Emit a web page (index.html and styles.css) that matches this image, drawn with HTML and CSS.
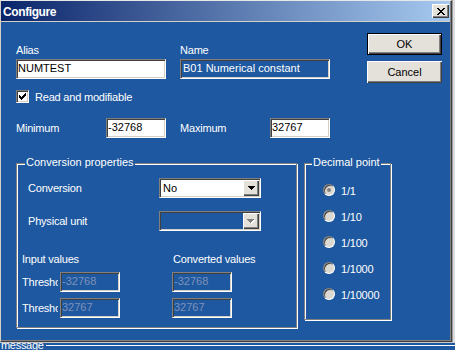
FILE: index.html
```html
<!DOCTYPE html>
<html>
<head>
<meta charset="utf-8">
<title>Configure</title>
<link rel="stylesheet" href="styles.css">
</head>
<body>
<div class="screen">
  <div class="dialog">
    <div class="titlebar">
      <span class="title">Configure</span>
      <span class="close">
        <svg width="8" height="7" viewBox="0 0 8 7" shape-rendering="crispEdges"><path d="M0 0h2v1h1v1h2v-1h1v-1h2v1h-1v1h-1v1h-1v1h1v1h1v1h1v1h-2v-1h-1v-1h-2v1h-1v1h-2v-1h1v-1h1v-1h1v-1h-1v-1h-1v-1h-1z" fill="#000"/></svg>
      </span>
    </div>
    <div class="body">
      <div class="top">
        <div class="fields">
          <div class="pair">
            <div class="field">
              <span class="lbl">Alias</span>
              <div class="edit">NUMTEST</div>
            </div>
            <div class="field">
              <span class="lbl">Name</span>
              <div class="edit ro">B01 Numerical constant</div>
            </div>
          </div>
          <div class="check-row">
            <span class="checkbox">
              <svg width="7" height="7" viewBox="0 0 7 7" shape-rendering="crispEdges"><path d="M6 0h1v3h-1v1h-1v1h-1v1h-1v1h-1v-1h-1v-1h-1v-3h1v1h1v1h1v-1h1v-1h1z" fill="#000"/></svg>
            </span>
            <span class="lbl">Read and modifiable</span>
          </div>
          <div class="minmax">
            <span class="lbl">Minimum</span>
            <div class="edit">-32768</div>
            <span></span>
            <span class="lbl">Maximum</span>
            <div class="edit">32767</div>
          </div>
        </div>
        <div class="buttons">
          <div class="btn default">OK</div>
          <div class="btn">Cancel</div>
        </div>
      </div>
      <div class="groups">
        <div class="group conv">
          <span class="gtitle">Conversion properties</span>
          <div class="combo-row">
            <span class="lbl dim">Conversion</span>
            <div class="combo">
              <span class="combo-text">No</span>
              <span class="drop"><svg width="7" height="4" viewBox="0 0 7 4" shape-rendering="crispEdges"><path d="M0 0h7v1h-1v1h-1v1h-1v1h-1v-1h-1v-1h-1v-1h-1z" fill="#000"/></svg></span>
            </div>
          </div>
          <div class="combo-row second">
            <span class="lbl dim">Physical unit</span>
            <div class="combo disabled">
              <span class="combo-text"></span>
              <span class="drop"><svg width="8" height="5" viewBox="0 0 8 5" shape-rendering="crispEdges"><path d="M1 1h7v1h-1v1h-1v1h-1v1h-1v-1h-1v-1h-1v-1h-1z" fill="#fff"/><path d="M0 0h7v1h-1v1h-1v1h-1v1h-1v-1h-1v-1h-1v-1h-1z" fill="#808080"/></svg></span>
            </div>
          </div>
          <div class="values">
            <span class="lbl dim head-in">Input values</span>
            <span class="lbl dim head-out">Converted values</span>
            <span class="lbl dim thresh">Threshold</span>
            <div class="edit off">-32768</div>
            <span></span>
            <div class="edit off">-32768</div>
            <span class="lbl dim thresh">Threshold</span>
            <div class="edit off">32767</div>
            <span></span>
            <div class="edit off">32767</div>
          </div>
        </div>
        <div class="group dec">
          <span class="gtitle">Decimal point</span>
          <div class="radios">
            <div class="radio-row"><span class="radio on"></span><span class="lbl dim">1/1</span></div>
            <div class="radio-row"><span class="radio"></span><span class="lbl dim">1/10</span></div>
            <div class="radio-row"><span class="radio"></span><span class="lbl dim">1/100</span></div>
            <div class="radio-row"><span class="radio"></span><span class="lbl dim">1/1000</span></div>
            <div class="radio-row"><span class="radio"></span><span class="lbl dim">1/10000</span></div>
          </div>
        </div>
      </div>
    </div>
  </div>
  <div class="strip"></div>
</div>
<div class="message-bar">
  <span class="msg">message</span>
  <span class="rule"></span>
</div>
</body>
</html>
```
FILE: styles.css
```css
* { box-sizing: border-box; }
html, body { margin: 0; padding: 0; }
body {
  width: 455px;
  height: 350px;
  overflow: hidden;
  background: #1e58a0;
  font-family: "Liberation Sans", Arial, sans-serif;
  font-size: 11px;
  color: #fff;
}
.screen { display: flex; height: 342px; }
.dialog {
  width: 452px;
  height: 342px;
  display: flex;
  flex-direction: column;
  background: #1e58a0;
  border-top: 1px solid #e8e8e8;
  border-left: 1px solid #d4d0c8;
  border-right: 1px solid #404040;
  border-bottom: 1px solid #404040;
  box-shadow: inset -1px -1px 0 #808080;
}
.strip {
  flex: 1;
  background: #dcdcdc;
  border-left: 1px solid #9a9a9a;
}
.titlebar {
  height: 21px;
  flex: none;
  display: flex;
  align-items: center;
  justify-content: space-between;
  padding: 1px 1px 0 2px;
  background: linear-gradient(to right, #0a246a, #a6caf0);
  border-bottom: 1px solid #d4d0c8;
  margin-right: 1px;
}
.title {
  font-weight: bold;
  font-size: 12px;
  letter-spacing: -0.4px;
  line-height: 14px;
}
.close {
  width: 17px;
  height: 14px;
  margin-top: -1px;
  display: flex;
  align-items: center;
  justify-content: center;
  background: #e4e1da;
  box-shadow: inset 1px 1px 0 #fff, inset -1px -1px 0 #404040, inset -2px -2px 0 #808080;
}
.close svg { display: block; }
.body {
  flex: 1;
  padding-left: 15px;
}
.lbl { letter-spacing: -0.2px; line-height: 13px; white-space: nowrap; }
.top { display: flex; }
.fields { width: 314px; padding-top: 22px; }
.pair { display: grid; grid-template-columns: 150px 150px; column-gap: 14px; }
.field .lbl { display: block; height: 15px; }
.edit {
  height: 20px;
  padding-left: 1px;
  background: #fff;
  color: #000;
  line-height: 16px;
  white-space: nowrap;
  overflow: hidden;
  border-top: 1px solid #808080;
  border-left: 1px solid #808080;
  border-bottom: 1px solid #fff;
  border-right: 1px solid #fff;
  box-shadow: inset 1px 1px 0 #404040, inset -1px -1px 0 #d4d0c8;
}
.edit.ro {
  background: transparent;
  color: #fff;
  padding-left: 2px;
}
.edit.off {
  background: transparent;
  color: #7f92b6;
}
.check-row {
  margin-top: 11px;
  height: 14px;
  display: flex;
  align-items: flex-start;
  gap: 6px;
}
.check-row .lbl { line-height: 15px; }
.checkbox {
  width: 13px;
  height: 13px;
  flex: none;
  display: flex;
  align-items: center;
  justify-content: center;
  background: #fff;
  border-top: 1px solid #808080;
  border-left: 1px solid #808080;
  border-bottom: 1px solid #fff;
  border-right: 1px solid #fff;
  box-shadow: inset 1px 1px 0 #404040, inset -1px -1px 0 #d4d0c8;
}
.checkbox svg { display: block; }
.minmax {
  margin-top: 14px;
  display: grid;
  grid-template-columns: 90px 60px 14px 90px 60px;
  align-items: center;
}
.buttons {
  width: 75px;
  margin-left: 37px;
  margin-top: 11px;
  display: flex;
  flex-direction: column;
  gap: 6px;
}
.btn {
  height: 22px;
  display: flex;
  align-items: center;
  justify-content: center;
  background: #e4e1da;
  color: #000;
  box-shadow: inset 1px 1px 0 #fff, inset -1px -1px 0 #404040, inset -2px -2px 0 #808080;
}
.btn.default { border: 1px solid #000; }
.groups {
  margin-top: 25px;
  display: flex;
  align-items: flex-start;
  gap: 7px;
}
.group {
  position: relative;
  border: 1px solid #808080;
  box-shadow: inset 1px 1px 0 #fff, 1px 1px 0 #fff;
}
.gtitle {
  position: absolute;
  top: -8px;
  left: 8px;
  padding: 0 1px;
  background: #1e58a0;
  line-height: 13px;
  white-space: nowrap;
}
.dec .gtitle { left: 7px; }
.conv {
  width: 281px;
  height: 165px;
  padding: 14px 0 0 11px;
}
.dec {
  width: 87px;
  height: 157px;
  padding: 20px 0 0 18px;
}
.combo-row {
  display: grid;
  grid-template-columns: 131px 102px;
  align-items: center;
}
.combo-row.second { margin-top: 13px; }
.combo {
  height: 20px;
  display: flex;
  background: #fff;
  color: #000;
  border-top: 1px solid #808080;
  border-left: 1px solid #808080;
  border-bottom: 1px solid #fff;
  border-right: 1px solid #fff;
  box-shadow: inset 1px 1px 0 #404040, inset -1px -1px 0 #d4d0c8;
  padding: 1px;
}
.combo.disabled { background: transparent; }
.combo-text { flex: 1; line-height: 16px; padding-left: 2px; }
.drop {
  width: 16px;
  height: 16px;
  display: flex;
  align-items: center;
  justify-content: center;
  background: #e4e1da;
  box-shadow: inset 1px 1px 0 #fff, inset -1px -1px 0 #404040, inset -2px -2px 0 #808080;
}
.drop svg { display: block; }
.values {
  margin: 22px 0 0 -6px;
  display: grid;
  grid-template-columns: 38px 60px 52px 60px;
  grid-template-rows: 13px 20px 20px;
  row-gap: 6px;
  align-items: center;
}
.head-in { grid-column: 1 / 4; }
.head-out { grid-column: 4; margin-left: 1px; }
.thresh { overflow: hidden; width: 36px; }
.radios { display: flex; flex-direction: column; gap: 12px; }
.radio-row { display: flex; align-items: flex-start; gap: 6px; }
.radio-row .lbl { margin-top: 1px; }
.radio {
  width: 12px;
  height: 12px;
  flex: none;
  border-radius: 50%;
  background: #dcd9d2;
  border: 1px solid;
  border-color: #808080 #fff #fff #808080;
  box-shadow: inset 1px 1px 0 #404040;
  display: flex;
  align-items: center;
  justify-content: center;
}
.radio.on::after {
  content: "";
  width: 4px;
  height: 4px;
  border-radius: 50%;
  background: #808080;
}
.message-bar {
  height: 8px;
  overflow: hidden;
  display: flex;
  align-items: flex-start;
  border-top: 1px solid #c8c8c8;
  background: #1e58a0;
}
.msg {
  margin-top: -3px;
  padding-left: 1px;
  line-height: 11px;
  letter-spacing: -0.3px;
}
.rule {
  flex: 1;
  height: 1px;
  margin: 2px 0 0 2px;
  background: #fff;
}
```
